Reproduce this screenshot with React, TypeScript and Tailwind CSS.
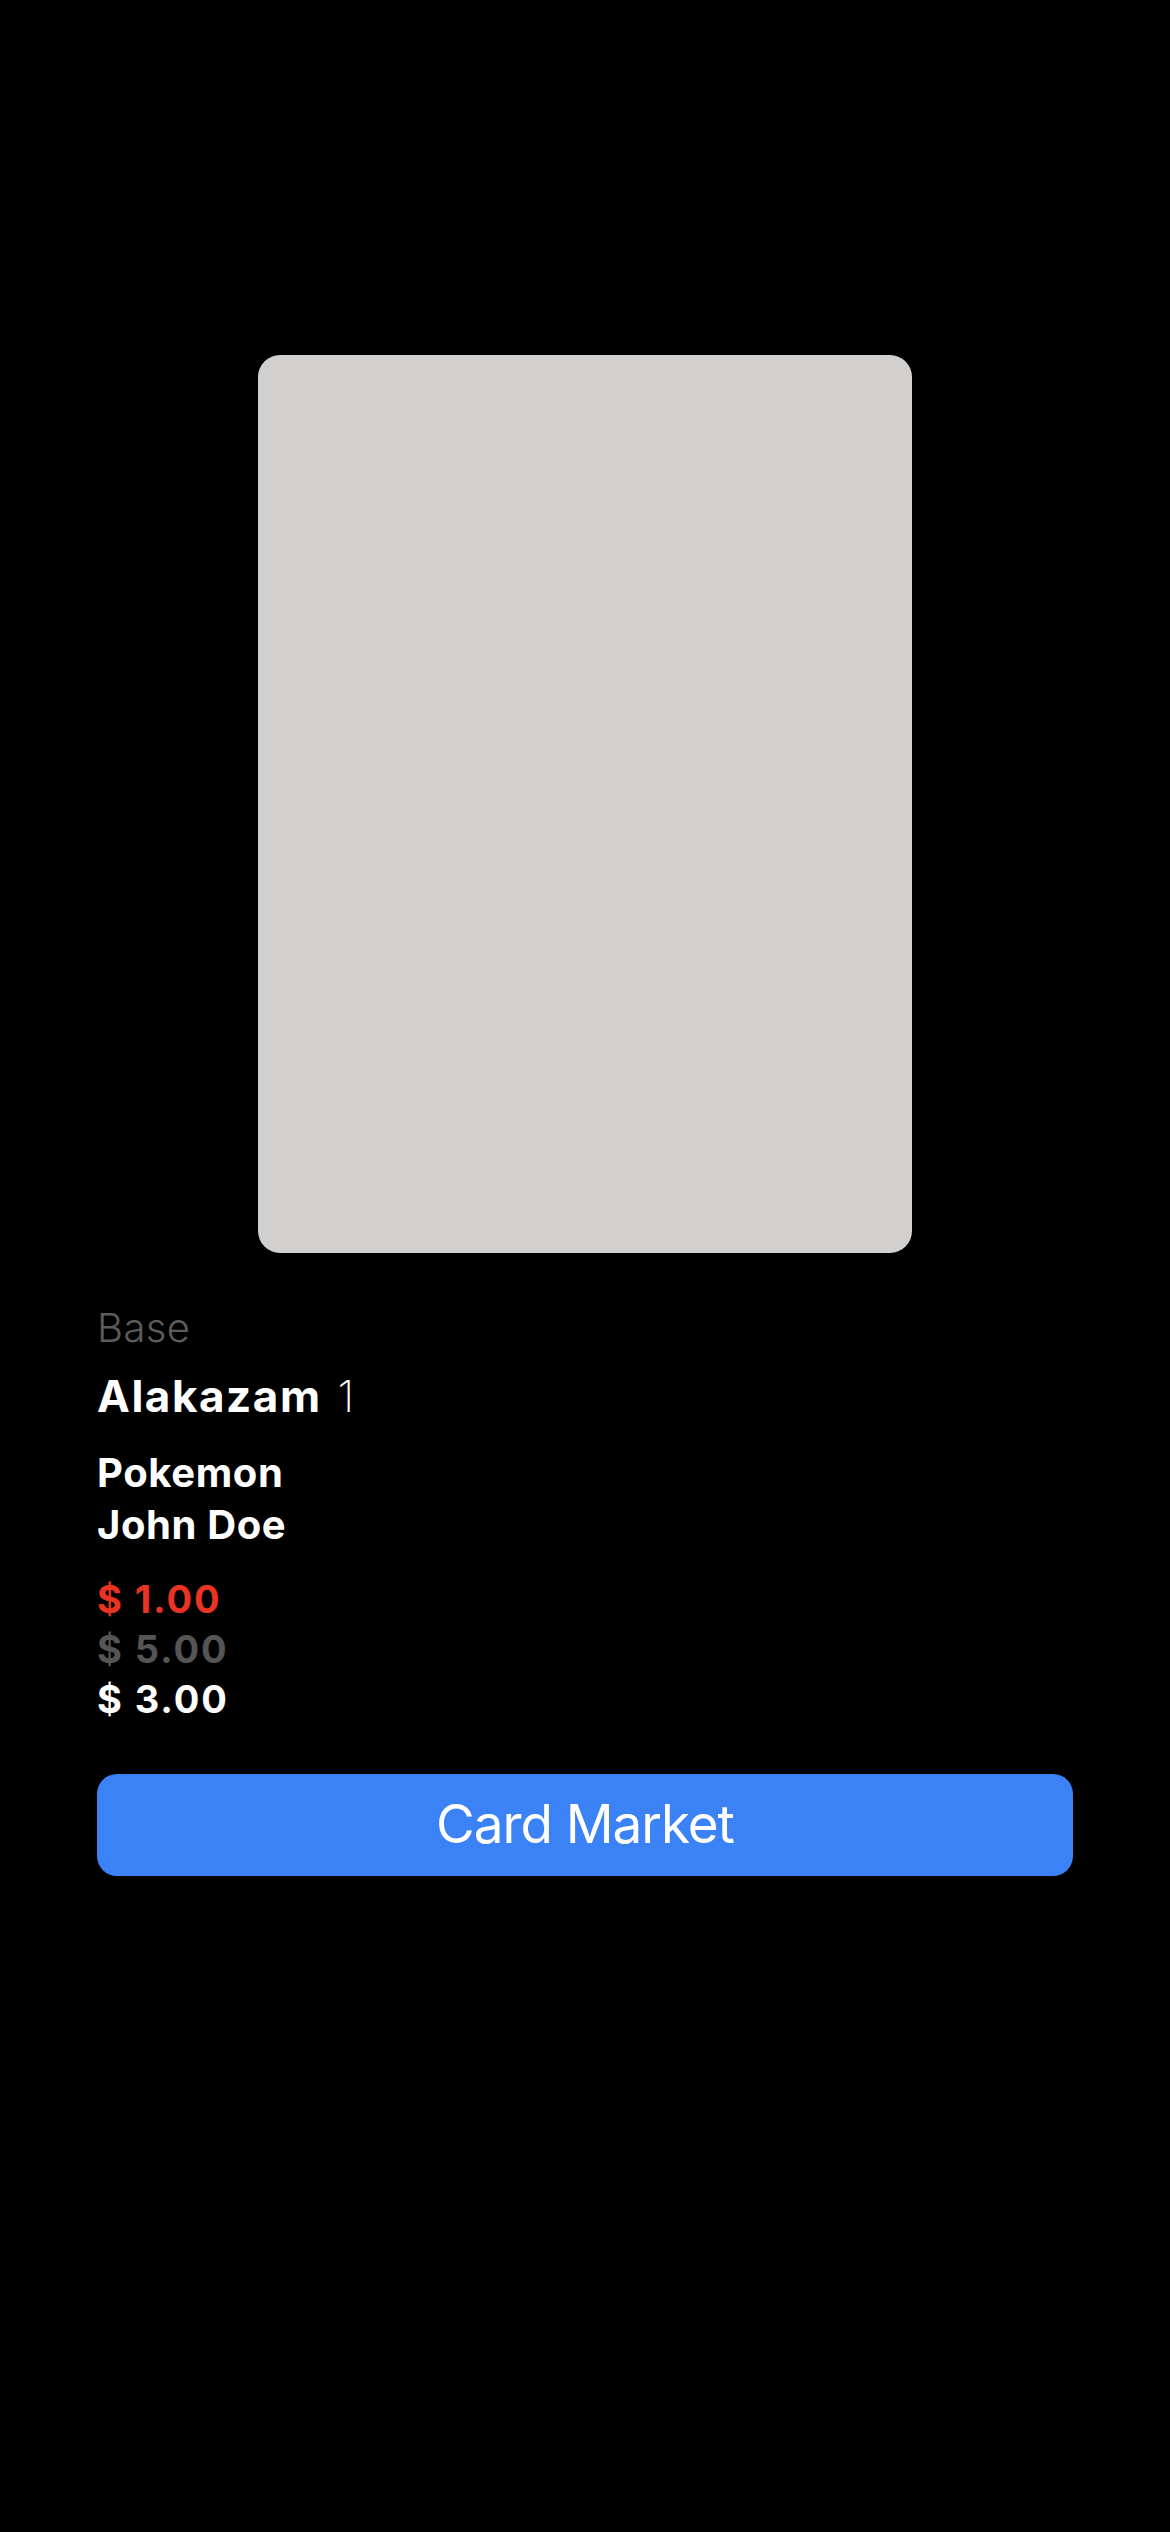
import React from "react";

const prices = [
  { label: "$ 1.00", color: "text-[#eb3324]" },
  { label: "$ 5.00", color: "text-[#555555]" },
  { label: "$ 3.00", color: "text-white" },
];

export default function App() {
  return (
    <div className="min-h-[2532px] w-full bg-black font-['Inter',sans-serif] text-white">
      <div className="flex flex-col px-[97px] pt-[355px]">
        <div className="mx-auto h-[898px] w-[654px] rounded-[22px] bg-[#d1d0ce]" />

        <div className="mt-[51px] text-[40px] leading-[48px] font-light tracking-[0.01em] text-[#5c5c5c]">Base</div>

        <div className="mt-[18px] flex items-baseline gap-[16px] text-[44px] leading-[52px]">
          <span className="font-bold tracking-[0.035em]">Alakazam</span>
          <span className="font-extralight">1</span>
        </div>

        <div className="mt-[25px] text-[40px] leading-[52px] font-bold tracking-[0.015em]">
          <div>Pokemon</div>
          <div>John Doe</div>
        </div>

        <div className="mt-[23px] text-[38px] leading-[50px] font-bold tracking-[0.05em]">
          {prices.map((p) => (
            <div key={p.label} className={p.color}>
              {p.label}
            </div>
          ))}
        </div>

        <button className="mt-[50px] h-[102px] w-full rounded-[20px] bg-[#3b82f6] text-[53px] font-normal tracking-[-0.02em] text-white">
          Card Market
        </button>
      </div>
    </div>
  );
}
